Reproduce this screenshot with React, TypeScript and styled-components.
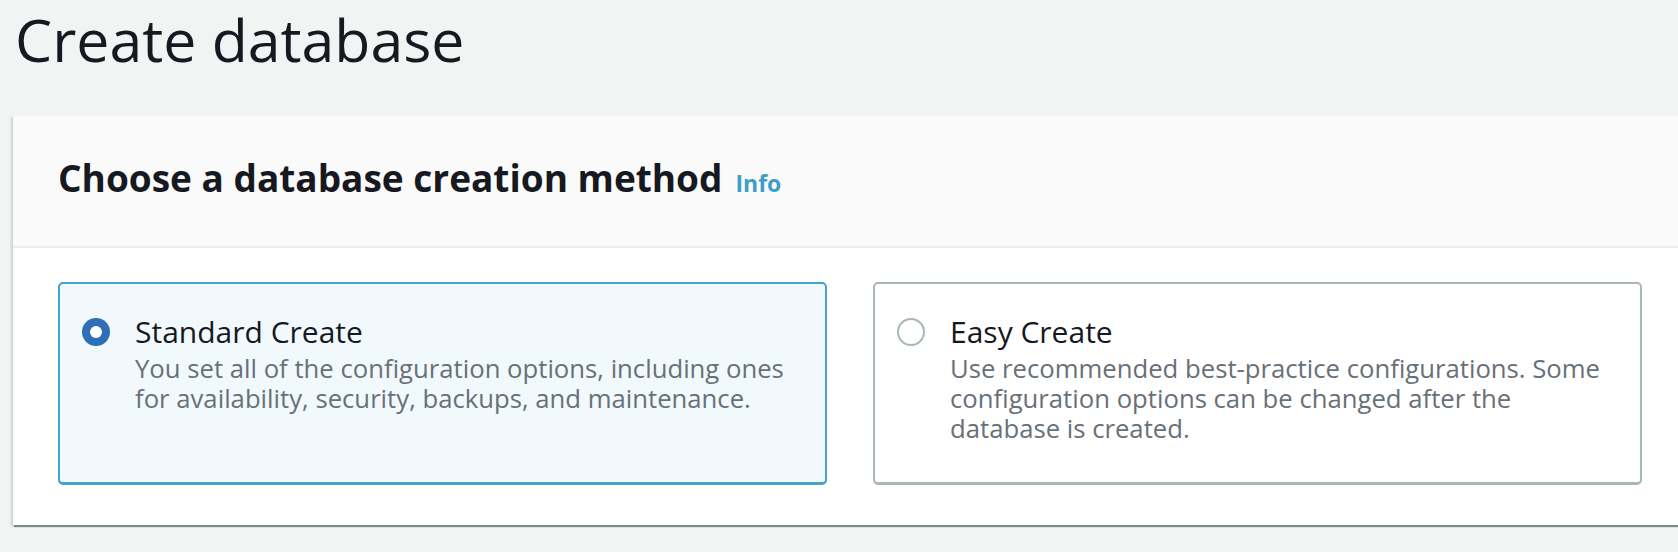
import React, { useState } from "react";
import styled, { createGlobalStyle } from "styled-components";

const GlobalStyle = createGlobalStyle`
  html, body {
    margin: 0;
    padding: 0;
    background: #f2f3f3;
    overflow: hidden;
  }
  body {
    font-family: "Open Sans", "Noto Sans", Arial, sans-serif;
    color: #16191f;
  }
`;

const Page = styled.div`
  width: 1678px;
  height: 552px;
  overflow: hidden;
  padding-left: 13px;
  box-sizing: border-box;
`;

const PageTitle = styled.h1`
  margin: 0 0 0 2px;
  padding-top: 3px;
  font-size: 59px;
  line-height: 72px;
  font-weight: 400;
  color: #16191f;
`;

const Container = styled.section`
  margin-top: 41px;
  width: 1674px;
  background: #ffffff;
  box-shadow: 0 3px 1px -1px rgba(0, 28, 36, 0.45),
    -2px 1px 2px 0 rgba(0, 28, 36, 0.15);
`;

const Header = styled.div`
  display: flex;
  align-items: baseline;
  padding: 43px 45px 47px 45px;
  background: #fafafa;
  border-bottom: 2px solid #eaeded;
`;

const Heading = styled.h2`
  margin: 0;
  font-size: 37px;
  line-height: 38px;
  font-weight: 700;
  color: #16191f;
`;

const InfoLink = styled.a`
  margin-left: 13px;
  font-size: 23px;
  font-weight: 700;
  color: #3f9ec8;
  text-decoration: none;
  cursor: pointer;
`;

const Body = styled.div`
  display: grid;
  grid-template-columns: 1fr 1fr;
  column-gap: 46px;
  padding: 34px 45px 40px 45px;
`;

const OptionCard = styled.label<{ $selected: boolean }>`
  display: flex;
  align-items: flex-start;
  gap: 25px;
  padding: 28px 22px 38px 22px;
  border: 2px solid ${(p) => (p.$selected ? "#44a3c9" : "#aab7b8")};
  border-bottom-width: 3px;
  border-radius: 5px;
  background: ${(p) => (p.$selected ? "#f1f9fd" : "#ffffff")};
  cursor: pointer;
`;

const Radio = styled.span<{ $checked: boolean }>`
  flex: none;
  width: 28px;
  height: 28px;
  margin-top: 6px;
  border-radius: 50%;
  box-sizing: border-box;
  display: flex;
  align-items: center;
  justify-content: center;
  background: ${(p) => (p.$checked ? "#2e6fb5" : "#ffffff")};
  border: ${(p) => (p.$checked ? "none" : "2px solid #aab7b8")};

  &::after {
    content: "";
    display: ${(p) => (p.$checked ? "block" : "none")};
    width: 12px;
    height: 12px;
    border-radius: 50%;
    background: #ffffff;
  }
`;

const OptionText = styled.div`
  display: flex;
  flex-direction: column;
`;

const OptionTitle = styled.div`
  font-size: 30px;
  line-height: 40px;
  color: #16191f;
`;

const OptionDescription = styled.div`
  margin-top: 2px;
  font-size: 25.7px;
  line-height: 30px;
  color: #687078;
`;

const options = [
  {
    id: "standard",
    title: "Standard Create",
    description:
      "You set all of the configuration options, including ones for availability, security, backups, and maintenance.",
  },
  {
    id: "easy",
    title: "Easy Create",
    description:
      "Use recommended best-practice configurations. Some configuration options can be changed after the database is created.",
  },
];

const App = () => {
  const [method, setMethod] = useState("standard");

  return (
    <Page>
      <GlobalStyle />
      <PageTitle>Create database</PageTitle>
      <Container>
        <Header>
          <Heading>Choose a database creation method</Heading>
          <InfoLink>Info</InfoLink>
        </Header>
        <Body>
          {options.map((option) => (
            <OptionCard
              key={option.id}
              $selected={method === option.id}
              onClick={() => setMethod(option.id)}
            >
              <Radio $checked={method === option.id} />
              <OptionText>
                <OptionTitle>{option.title}</OptionTitle>
                <OptionDescription>{option.description}</OptionDescription>
              </OptionText>
            </OptionCard>
          ))}
        </Body>
      </Container>
    </Page>
  );
};

export default App;
